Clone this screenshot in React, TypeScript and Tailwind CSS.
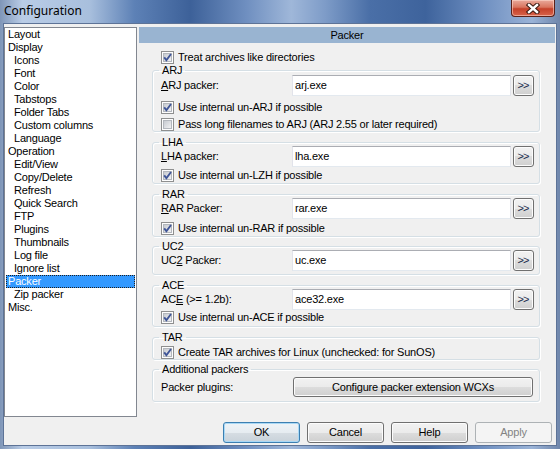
import React from "react";

const tree: [string, number][] = [
  ["Layout", 0], ["Display", 0], ["Icons", 1], ["Font", 1], ["Color", 1], ["Tabstops", 1],
  ["Folder Tabs", 1], ["Custom columns", 1], ["Language", 1], ["Operation", 0], ["Edit/View", 1],
  ["Copy/Delete", 1], ["Refresh", 1], ["Quick Search", 1], ["FTP", 1], ["Plugins", 1],
  ["Thumbnails", 1], ["Log file", 1], ["Ignore list", 1], ["Packer", 0], ["Zip packer", 1], ["Misc.", 0],
];

function CheckBox({ checked }: { checked: boolean }) {
  return (
    <svg width="13" height="13" viewBox="0 0 13 13" className="shrink-0">
      <defs>
        <linearGradient id="cbg" x1="0" y1="0" x2="1" y2="1">
          <stop offset="0" stopColor="#c4c8ce" />
          <stop offset="1" stopColor="#f4f4f5" />
        </linearGradient>
      </defs>
      <rect x="0.5" y="0.5" width="12" height="12" fill="#fdfdfd" stroke="#8e8f8f" />
      <rect x="2.5" y="2.5" width="8" height="8" fill="url(#cbg)" stroke="#b3b7bd" />
      {checked && (
        <path d="M3.2 6.4 L5.4 9.2 L10 3" fill="none" stroke="#3f5597" strokeWidth="1.9" strokeLinejoin="miter" />
      )}
    </svg>
  );
}

function CheckRow({ checked, text, className = "" }: { checked: boolean; text: string; className?: string }) {
  return (
    <div className={`flex items-center h-[13px] gap-[4px] leading-[13px] ${className}`}>
      <CheckBox checked={checked} />
      <span className="whitespace-nowrap">{text}</span>
    </div>
  );
}

function Label({ pre, u, post }: { pre: string; u: string; post: string }) {
  return (
    <span className="whitespace-nowrap">
      {pre}
      <span className="underline underline-offset-1">{u}</span>
      {post}
    </span>
  );
}

function FileRow({ label, value, className = "" }: { label: React.ReactNode; value: string; className?: string }) {
  return (
    <div className={`flex items-center h-[21px] ${className}`}>
      <div className="w-[131px] leading-[13px]">{label}</div>
      <div className="w-[219px] h-[21px] bg-white border border-[#e2e3ea] border-t-[#abadb3] border-b-[#e3e9ef] flex items-center pl-[2px] leading-[13px]">
        {value}
      </div>
      <div className="ml-[2px] w-[21px] h-[21px] rounded-[3px] border border-[#707070] bg-[linear-gradient(#f2f2f2_0%,#ebebeb_50%,#dddddd_50%,#cfcfcf_100%)] shadow-[inset_0_0_0_1px_#fcfcfc] flex items-center justify-center text-[11px] leading-[11px] text-[#1c2c4c] tracking-[-0.8px] pr-[1px]">
        &gt;&gt;
      </div>
    </div>
  );
}

function Group({ title, className = "", children }: { title: string; className?: string; children: React.ReactNode }) {
  return (
    <fieldset
      className={`border border-[#d5dfe5] rounded-[3px] pl-[8px] pr-[5px] shadow-[inset_1px_1px_0_#ffffff,1px_1px_0_#ffffff] ${className}`}
    >
      <legend className="ml-[-2px] px-[3px] leading-[8px]">{title}</legend>
      {children}
    </fieldset>
  );
}

function WinButton({ text, kind = "normal" }: { text: string; kind?: "normal" | "default" | "disabled" }) {
  const base = "w-[77px] h-[21px] rounded-[3px] border flex items-center justify-center leading-[13px]";
  if (kind === "disabled")
    return <div className={`${base} border-[#adb2b5] bg-[#f4f4f4] text-[#838383]`}>{text}</div>;
  if (kind === "default")
    return (
      <div
        className={`${base} border-[#3c7fb1] bg-[linear-gradient(#eef3f7_0%,#e6ecf1_50%,#d6dde3_50%,#c9d2da_100%)] shadow-[inset_0_0_0_1px_#a9d8f5]`}
      >
        {text}
      </div>
    );
  return (
    <div
      className={`${base} border-[#707070] bg-[linear-gradient(#f2f2f2_0%,#ebebeb_50%,#dddddd_50%,#cfcfcf_100%)] shadow-[inset_0_0_0_1px_#fcfcfc]`}
    >
      {text}
    </div>
  );
}

export default function App() {
  return (
    <div className="w-[560px] h-[449px] overflow-hidden flex flex-col px-[3px] pb-[3px] text-[11px] text-black tracking-[-0.2px] font-['Liberation_Sans',Arial,sans-serif] bg-[linear-gradient(90deg,#7f96b8_0%,#b9cce6_4%,#a8bfdd_16%,#5d81b6_24%,#3d6199_34%,#6f8fc0_44%,#9fb7d9_52%,#7e9cc8_58%,#4a6fa7_66%,#3e639c_76%,#6d8ec0_86%,#9ab3d7_95%,#6f86ab_100%)]">
      {/* title bar */}
      <div className="h-[23px] flex justify-between shrink-0">
        <div className="self-center pl-[1px] pb-[2px] text-[12px] tracking-normal font-['Noto_Sans',sans-serif] text-black">
          Configuration
        </div>
        <div className="mr-[2px] w-[44px] h-[17px] rounded-b-[4px] border border-t-0 border-[#5b2119] bg-[linear-gradient(#e9a99b_0%,#d9755f_45%,#c5412a_55%,#d8634a_100%)] shadow-[inset_0_0_0_1px_rgba(255,220,210,0.55)] flex items-center justify-center">
          <svg width="14" height="11" viewBox="0 0 14 11">
            <path d="M3 2 L11 9 M11 2 L3 9" stroke="#3a1810" strokeWidth="4.4" strokeLinecap="square" />
            <path d="M3 2 L11 9 M11 2 L3 9" stroke="#ffffff" strokeWidth="2.4" strokeLinecap="square" />
          </svg>
        </div>
      </div>

      {/* client */}
      <div className="flex-1 border border-[#5d7397] bg-[#f0f0f0] flex flex-col">
        <div className="flex mt-[3px] h-[390px] gap-[2px]">
          {/* tree */}
          <div className="w-[133px] h-[390px] border border-[#828790] bg-white pt-0 pl-[1px] pr-[1px]">
            {tree.map(([name, lvl]) =>
              name === "Packer" ? (
                <div
                  key={name}
                  className="h-[13px] leading-[11px] bg-[#3399ff] text-white border border-dotted border-[#202020] pl-[1px]"
                >
                  {name}
                </div>
              ) : (
                <div key={name} className={`h-[13px] leading-[13px] whitespace-nowrap ${lvl ? "pl-[8px]" : "pl-[2px]"}`}>
                  {name}
                </div>
              )
            )}
          </div>

          {/* panel */}
          <div className="flex-1 mr-[1px] flex flex-col">
            <div className="h-[16px] bg-[#99b4d1] flex items-center justify-center leading-[16px]">Packer</div>
            <div className="pl-[13px] pr-[15px] flex flex-col">
              <CheckRow checked text="Treat archives like directories" className="mt-[8px] ml-[9px]" />

              <Group title="ARJ" className="mt-[2px]">
                <FileRow className="mt-[1px]" label={<Label pre="" u="A" post="RJ packer:" />} value="arj.exe" />
                <CheckRow checked text="Use internal un-ARJ if possible" className="mt-[5px]" />
                <CheckRow checked={false} text="Pass long filenames to ARJ (ARJ 2.55 or later required)" className="mt-[4px]" />
              </Group>

              <Group title="LHA" className="mt-[6px] pb-[1px]">
                <FileRow label={<Label pre="" u="L" post="HA packer:" />} value="lha.exe" />
                <CheckRow checked text="Use internal un-LZH if possible" className="mt-[2px]" />
              </Group>

              <Group title="RAR" className="mt-[6px] pb-[1px]">
                <FileRow label={<Label pre="" u="R" post="AR Packer:" />} value="rar.exe" />
                <CheckRow checked text="Use internal un-RAR if possible" className="mt-[3px]" />
              </Group>

              <Group title="UC2" className="mt-[5px] pb-[3px]">
                <FileRow label={<Label pre="UC" u="2" post=" Packer:" />} value="uc.exe" />
              </Group>

              <Group title="ACE" className="mt-[6px] pb-[2px]">
                <FileRow label={<Label pre="AC" u="E" post=" (>= 1.2b):" />} value="ace32.exe" />
                <CheckRow checked text="Use internal un-ACE if possible" className="mt-[1px]" />
              </Group>

              <Group title="TAR" className="mt-[6px]">
                <CheckRow checked text="Create TAR archives for Linux (unchecked: for SunOS)" className="mt-[5px]" />
              </Group>

              <Group title="Additional packers" className="mt-[5px] pb-[4px]">
                <div className="flex items-center mt-[4px] h-[20px]">
                  <div className="w-[132px] leading-[13px]">Packer plugins:</div>
                  <div className="w-[240px] h-[20px] rounded-[3px] border border-[#707070] bg-[linear-gradient(#f2f2f2_0%,#ebebeb_50%,#dddddd_50%,#cfcfcf_100%)] shadow-[inset_0_0_0_1px_#fcfcfc] flex items-center justify-center leading-[13px]">
                    Configure packer extension WCXs
                  </div>
                </div>
              </Group>
            </div>
          </div>
        </div>

        {/* buttons */}
        <div className="flex justify-end gap-[7px] mt-[5px] pr-[4px]">
          <WinButton text="OK" kind="default" />
          <WinButton text="Cancel" />
          <WinButton text="Help" />
          <WinButton text="Apply" kind="disabled" />
        </div>
      </div>
    </div>
  );
}
